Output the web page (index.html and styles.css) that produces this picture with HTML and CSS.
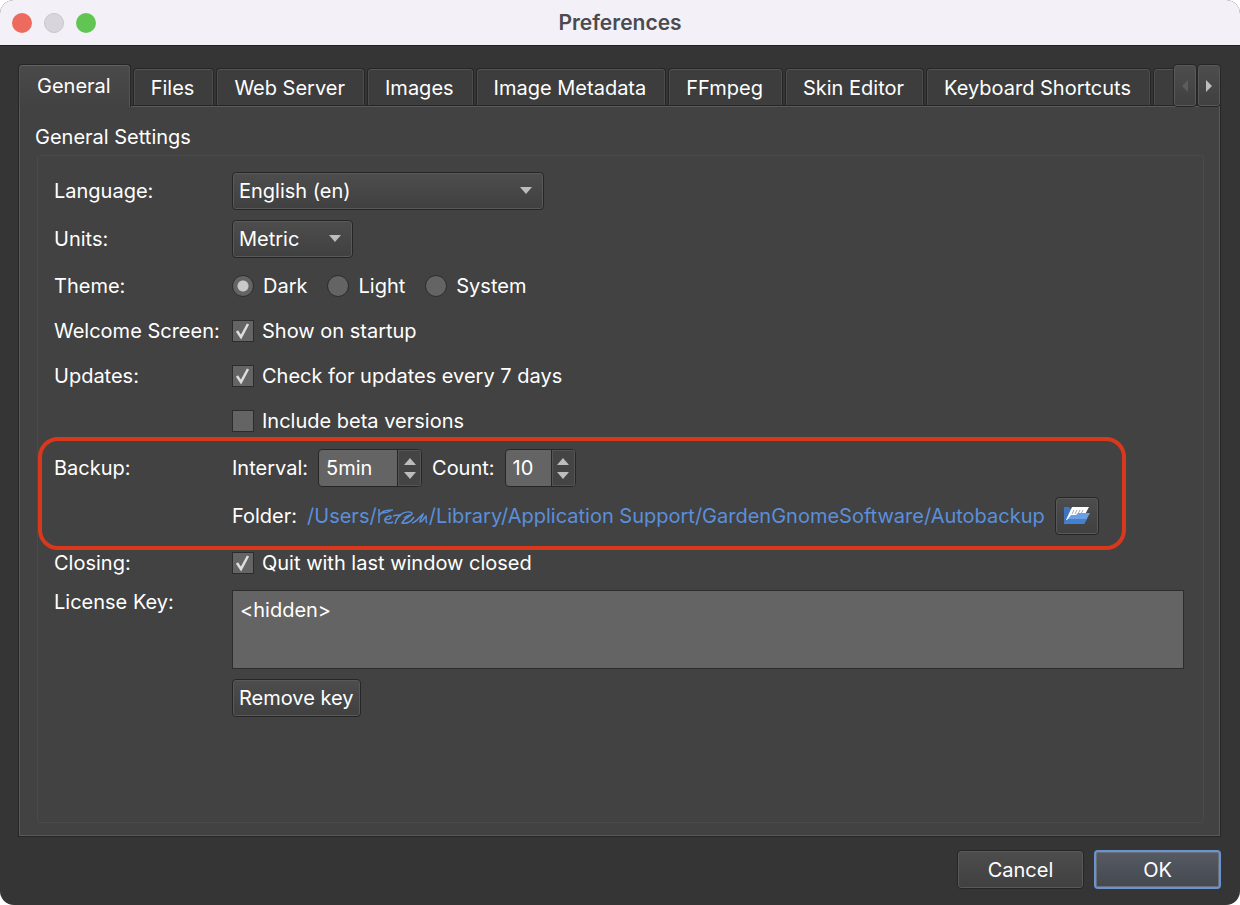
FILE: index.html
```html
<!DOCTYPE html>
<html lang="en">
<head>
    <meta charset="UTF-8">
    <meta name="viewport" content="width=device-width, initial-scale=1.0">
    <title>Preferences</title>
    <link rel="stylesheet" href="styles.css">
</head>
<body>
    <div class="window">
        <header class="titlebar">
            <div class="lights">
                <span class="light red"></span>
                <span class="light grey"></span>
                <span class="light green"></span>
            </div>
            <h1>Preferences</h1>
        </header>

        <main class="content">
            <div class="tab-row">
                <div class="tabs" role="tablist">
                    <button class="tab active" role="tab" aria-selected="true">General</button>
                    <button class="tab" role="tab">Files</button>
                    <button class="tab" role="tab">Web Server</button>
                    <button class="tab" role="tab">Images</button>
                    <button class="tab" role="tab">Image Metadata</button>
                    <button class="tab" role="tab">FFmpeg</button>
                    <button class="tab" role="tab">Skin Editor</button>
                    <button class="tab" role="tab">Keyboard Shortcuts</button>
                    <button class="tab" role="tab"></button>
                </div>
                <button class="btn scroll-btn">
                    <svg width="8" height="14" viewBox="0 0 8 14"><path d="M7 1v12L1 7z" fill="#5c5c5c"/></svg>
                </button>
                <button class="btn scroll-btn">
                    <svg width="8" height="14" viewBox="0 0 8 14"><path d="M1 1v12l6-6z" fill="#bdbdbd"/></svg>
                </button>
            </div>

            <section class="panel">
                <h2>General Settings</h2>
                <form class="settings">
                    <div class="row">
                        <label for="language">Language:</label>
                        <div class="select language">
                            <select id="language"><option>English (en)</option></select>
                            <svg class="arrow" width="14" height="8" viewBox="0 0 14 8"><path d="M1 1h12L7 8z" fill="#bdbdbd"/></svg>
                        </div>
                    </div>
                    <div class="row">
                        <label for="units">Units:</label>
                        <div class="select units">
                            <select id="units"><option>Metric</option></select>
                            <svg class="arrow" width="14" height="8" viewBox="0 0 14 8"><path d="M1 1h12L7 8z" fill="#bdbdbd"/></svg>
                        </div>
                    </div>
                    <div class="row">
                        <span>Theme:</span>
                        <div class="radios">
                            <label><input type="radio" name="theme" checked>Dark</label>
                            <label><input type="radio" name="theme">Light</label>
                            <label><input type="radio" name="theme">System</label>
                        </div>
                    </div>
                    <div class="row">
                        <span>Welcome Screen:</span>
                        <label class="check">
                            <input type="checkbox" checked>
                            <svg class="tick" width="22" height="22" viewBox="0 0 22 22"><path d="M5 11l4 6 7-13"/></svg>
                            Show on startup
                        </label>
                    </div>
                    <div class="row">
                        <span>Updates:</span>
                        <label class="check">
                            <input type="checkbox" checked>
                            <svg class="tick" width="22" height="22" viewBox="0 0 22 22"><path d="M5 11l4 6 7-13"/></svg>
                            Check for updates every 7 days
                        </label>
                    </div>
                    <div class="row">
                        <span></span>
                        <label class="check">
                            <input type="checkbox">
                            Include beta versions
                        </label>
                    </div>

                    <div class="backup">
                        <div class="row">
                            <span>Backup:</span>
                            <div class="inline">
                                <label for="interval">Interval:</label>
                                <div class="spin spin-interval">
                                    <input type="text" id="interval" value="5min">
                                    <div class="spin-buttons">
                                        <button type="button"><svg width="12" height="7" viewBox="0 0 12 7"><path d="M0 7h12L6 0z" fill="#bdbdbd"/></svg></button>
                                        <button type="button"><svg width="12" height="7" viewBox="0 0 12 7"><path d="M0 0h12L6 7z" fill="#bdbdbd"/></svg></button>
                                    </div>
                                </div>
                                <label for="count">Count:</label>
                                <div class="spin spin-count">
                                    <input type="text" id="count" value="10">
                                    <div class="spin-buttons">
                                        <button type="button"><svg width="12" height="7" viewBox="0 0 12 7"><path d="M0 7h12L6 0z" fill="#bdbdbd"/></svg></button>
                                        <button type="button"><svg width="12" height="7" viewBox="0 0 12 7"><path d="M0 0h12L6 7z" fill="#bdbdbd"/></svg></button>
                                    </div>
                                </div>
                            </div>
                        </div>
                        <div class="row">
                            <span></span>
                            <div class="inline">
                                <span>Folder:</span>
                                <a class="path" href="#">
                                    <span>/Users/</span>
                                    <svg class="scribble" width="52" height="24" viewBox="0 0 52 24">
                                        <path d="M2 5v14M2 12c2-4 5-6 14-6M5 9c3 0 7-1 10-3"/>
                                        <path d="M8 15c3 1 6 0 6-2s-5-1-6 2c-1 4 4 5 8 3"/>
                                        <path d="M18 20c1-4 2-7 6-9M16 12c2-1 5-1 7-1"/>
                                        <path d="M23 11c4-3 9-4 12-2 1 3-7 4-10 10 5 1 9-1 12-6M27 14c3-2 5-3 7-3"/>
                                        <path d="M35 19c5-1 8-7 11-9 0 3-4 6-3 8 2 0 4-4 6-6 1 2-1 5 1 7"/>
                                    </svg>
                                    <span>/Library/Application Support/GardenGnomeSoftware/Autobackup</span>
                                </a>
                                <button type="button" class="btn folder-btn">
                                    <svg width="26" height="18" viewBox="0 0 26 18">
                                        <path d="M0 0h5l2 2v15H0z" fill="#3f74c0"/>
                                        <path d="M8 0h17l-7 13H2z" fill="#fff"/>
                                        <path d="M10 3l-2 4M13 3l-2 4M16 3l-2 4M19 3l-2 4" stroke="#aaa" stroke-width="1"/>
                                        <path d="M7 8h5l2-2h12l-6 11H0z" fill="#6a9fe6"/>
                                        <path d="M4 12h19l-3 5H0z" fill="#4580d0"/>
                                    </svg>
                                </button>
                            </div>
                        </div>
                    </div>

                    <div class="row">
                        <span>Closing:</span>
                        <label class="check">
                            <input type="checkbox" checked>
                            <svg class="tick" width="22" height="22" viewBox="0 0 22 22"><path d="M5 11l4 6 7-13"/></svg>
                            Quit with last window closed
                        </label>
                    </div>
                    <div class="row top">
                        <label for="license">License Key:</label>
                        <textarea id="license">&lt;hidden&gt;</textarea>
                    </div>
                    <div class="row">
                        <span></span>
                        <button type="button" class="btn remove-btn">Remove key</button>
                    </div>
                </form>
            </section>

            <footer class="footer">
                <button class="btn cancel-btn">Cancel</button>
                <button class="btn ok-btn">OK</button>
            </footer>
        </main>
    </div>
</body>
</html>
```
FILE: styles.css
```css
* {
    box-sizing: border-box;
}

body {
    margin: 0;
    background-color: #fff;
}

body, button, input, select, textarea {
    font-family: Inter, "Liberation Sans", sans-serif;
    font-size: 20px;
    line-height: 24px;
    color: #fff;
}

button {
    padding: 0;
    cursor: pointer;
}

.window {
    min-height: 100vh;
    display: flex;
    flex-direction: column;
    background-color: #353535;
    border-radius: 14px;
    overflow: hidden;
}

/* Title bar */
.titlebar {
    display: grid;
    grid-template-columns: 1fr auto 1fr;
    align-items: center;
    height: 46px;
    padding: 0 12px;
    background-color: #f3f1f7;
    border-bottom: 1px solid #202020;
}

.titlebar h1 {
    margin: 0;
    font-size: 21px;
    font-weight: 600;
    color: #4b4a4e;
}

.lights {
    display: flex;
    gap: 12px;
}

.light {
    width: 20px;
    height: 20px;
    border-radius: 50%;
}

.red {
    background-color: #ed6a5e;
}

.grey {
    background-color: #d8d6dc;
    border: 1px solid #c8c6cc;
}

.green {
    background-color: #61c554;
}

.content {
    flex: 1;
    display: flex;
    flex-direction: column;
    padding: 18px 19px 16px 18px;
}

/* Tabs */
.tab-row {
    display: flex;
    align-items: flex-end;
    position: relative;
    z-index: 1;
    margin-bottom: -2px;
}

.tabs {
    flex: 1;
    min-width: 0;
    display: flex;
    align-items: flex-end;
    gap: 2px;
    overflow: hidden;
}

.tab {
    flex: none;
    height: 37px;
    margin-bottom: 2px;
    padding: 2px 19px 0 17px;
    border: 1px solid #262626;
    border-bottom: none;
    border-radius: 4px 4px 0 0;
    background-color: #3d3d3d;
    box-shadow: inset 0 1px #555, inset 1px 0 #4c4c4c, inset -1px 0 #4c4c4c;
}

.tab:empty {
    width: 100px;
}

.tab.active {
    height: 43px;
    margin-bottom: 0;
    padding: 0 19px 0 18px;
    background: linear-gradient(#4a4a4a, #424242);
    box-shadow: inset 0 1px #606060, inset 1px 0 #555, inset -1px 0 #555;
}

.btn {
    border: 1px solid #262626;
    border-radius: 4px;
    background: linear-gradient(#4d4d4d, #404040);
    box-shadow: inset 0 0 0 1px #595959;
}

.scroll-btn {
    display: flex;
    align-items: center;
    justify-content: center;
    width: 24px;
    height: 43px;
}

/* Panel */
.panel {
    flex: 1;
    display: flex;
    flex-direction: column;
    padding: 19px 16px 13px;
    border: 1px solid #262626;
    background-color: #424242;
    box-shadow: inset 0 0 0 1px #5a5a5a;
}

.panel h2 {
    margin: 0 0 6px;
    font-size: 20px;
    font-weight: 400;
}

.settings {
    flex: 1;
    display: flex;
    flex-direction: column;
    gap: 10px;
    margin-left: 2px;
    padding: 16px 19px 16px 16px;
    border: 1px solid #4a4a4a;
    border-radius: 3px;
}

.row {
    display: grid;
    grid-template-columns: 178px 1fr;
    align-items: center;
    justify-items: start;
    min-height: 35px;
}

.row.top {
    align-items: start;
}

.inline {
    display: flex;
    align-items: center;
    gap: 10px;
}

.radios {
    display: flex;
    gap: 20px;
}

.radios label, .check {
    display: flex;
    align-items: center;
    gap: 9px;
    position: relative;
}

.check {
    gap: 8px;
}

.select {
    position: relative;
}

.language {
    width: 312px;
}

.units {
    width: 121px;
}

.select select {
    display: block;
    width: 100%;
    height: 38px;
    padding: 0 6px;
    appearance: none;
    border: 1px solid #262626;
    border-radius: 4px;
    background: linear-gradient(#4d4d4d, #404040);
    box-shadow: inset 0 0 0 1px #595959;
}

.arrow {
    position: absolute;
    right: 11px;
    top: 14px;
    pointer-events: none;
}

input[type="radio"], input[type="checkbox"] {
    appearance: none;
    width: 22px;
    height: 22px;
    margin: 0;
    border: 1px solid #2c2c2c;
    background-color: #646464;
}

input[type="radio"] {
    border-radius: 50%;
}

input[type="radio"]:checked {
    background-image: radial-gradient(circle, #c8c8c8 5px, #646464 6px);
}

.tick {
    position: absolute;
    left: 0;
    fill: none;
    stroke: #dedede;
    stroke-width: 2.5;
    pointer-events: none;
}

input:not(:checked) + .tick {
    display: none;
}

/* Backup block with red marker */
.backup {
    position: relative;
    width: fit-content;
    display: flex;
    flex-direction: column;
    gap: 10px;
    padding-top: 1px;
}

.backup::after {
    content: "";
    position: absolute;
    inset: -11px -27px -15px -16px;
    border: 4px solid #d8381b;
    border-radius: 20px;
    pointer-events: none;
}

.spin {
    display: flex;
    height: 38px;
    border: 1px solid #262626;
    border-radius: 4px;
    background-color: #646464;
    overflow: hidden;
}

.spin-interval {
    width: 104px;
}

.spin-count {
    width: 71px;
}

.spin input {
    flex: 1;
    min-width: 0;
    padding: 0 0 0 7px;
    border: none;
    background: none;
}

.spin-buttons {
    display: flex;
    flex-direction: column;
    justify-content: center;
    gap: 7px;
    width: 24px;
    border-left: 1px solid #262626;
    background-color: #444;
    box-shadow: inset 0 0 0 1px #555;
}

.spin-buttons button {
    display: flex;
    justify-content: center;
    border: none;
    background: none;
}

.path {
    display: flex;
    align-items: center;
    color: #5a8fdc;
    text-decoration: none;
}

.scribble {
    fill: none;
    stroke: #5a8fdc;
    stroke-width: 1.5;
}

.folder-btn {
    display: flex;
    align-items: center;
    justify-content: center;
    width: 44px;
    height: 38px;
}

textarea {
    display: block;
    width: 100%;
    height: 79px;
    padding: 7px;
    border: 1px solid #2c2c2c;
    background-color: #646464;
    resize: none;
}

.remove-btn {
    height: 38px;
    padding: 0 6px;
}

.footer {
    display: flex;
    justify-content: flex-end;
    gap: 10px;
    padding-top: 13px;
}

.cancel-btn, .ok-btn {
    width: 127px;
    height: 39px;
}

.ok-btn {
    border: 2px solid #6a93cf;
    background: linear-gradient(#565a63, #44484f);
    box-shadow: inset 0 0 0 1px #6a6e77;
}
```
